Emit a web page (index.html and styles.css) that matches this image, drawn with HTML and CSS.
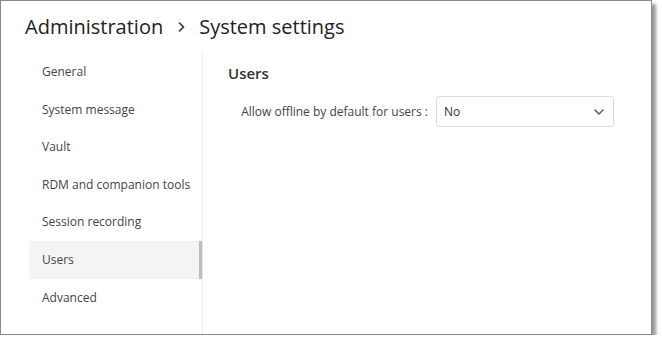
FILE: index.html
```html
<!DOCTYPE html>
<html lang="en">
<head>
    <meta charset="UTF-8">
    <meta name="viewport" content="width=device-width, initial-scale=1.0">
    <title>System settings</title>
    <link rel="stylesheet" href="styles.css">
</head>
<body>
    <div class="frame">
        <h1 class="crumbs">
            <span>Administration</span>
            <svg class="sep" width="10" height="12" viewBox="0 0 10 12">
                <path d="M3 1.5 L7.5 6 L3 10.5" fill="none" stroke="#333" stroke-width="1.6"/>
            </svg>
            <span>System settings</span>
        </h1>
        <div class="layout">
            <ul class="nav">
                <li>General</li>
                <li>System message</li>
                <li>Vault</li>
                <li>RDM and companion tools</li>
                <li>Session recording</li>
                <li class="active">Users</li>
                <li>Advanced</li>
            </ul>
            <div class="content">
                <h2>Users</h2>
                <div class="field">
                    <label>Allow offline by default for users :</label>
                    <div class="select">
                        <span>No</span>
                        <svg width="12" height="8" viewBox="0 0 12 8">
                            <path d="M1.5 1.5 L6 6 L10.5 1.5" fill="none" stroke="#555" stroke-width="1.4"/>
                        </svg>
                    </div>
                </div>
            </div>
        </div>
    </div>
</body>
</html>
```

FILE: styles.css
```css
body {
    margin: 0;
    background: #fff;
    font-family: "Open Sans", "Noto Sans", sans-serif;
    color: #3a3a3a;
}
.frame {
    width: 650px;
    height: 333px;
    border: 1px solid #8a8a8a;
    background: #fff;
    box-shadow: 4px 4px 3px #9a9a9a;
    display: flex;
    flex-direction: column;
}
.crumbs {
    margin: 0;
    padding: 11px 0 0 24px;
    height: 40px;
    box-sizing: border-box;
    font-size: 20px;
    font-weight: 400;
    line-height: 28px;
    color: #222;
    display: flex;
    align-items: center;
    gap: 13px;
}
.crumbs .sep {
    margin-top: 1px;
}
.layout {
    flex: 1;
    display: flex;
    margin-top: 12px;
}
.nav {
    list-style: none;
    margin: 0 0 0 28px;
    padding: 0;
    width: 173px;
    border-right: 1px solid #ececec;
    font-size: 12px;
    color: #444;
}
.nav li {
    height: 37.6px;
    line-height: 37.6px;
    padding-left: 13px;
}
.nav li.active {
    background: #f4f4f4;
    box-shadow: inset -3px 0 0 #bcbcbc;
}
.content {
    flex: 1;
    padding: 8px 0 0 25px;
}
.content h2 {
    margin: 0;
    font-size: 15px;
    font-weight: 600;
    line-height: 24px;
    color: #333;
}
.field {
    display: flex;
    align-items: center;
    gap: 8px;
    margin-top: 11px;
}
.field label {
    width: 200px;
    text-align: right;
    font-size: 12px;
    color: #444;
}
.select {
    width: 178px;
    height: 31px;
    box-sizing: border-box;
    border: 1px solid #dedede;
    border-radius: 3px;
    display: flex;
    align-items: center;
    justify-content: space-between;
    padding: 0 8px 0 7px;
    font-size: 12px;
    color: #333;
}
```
